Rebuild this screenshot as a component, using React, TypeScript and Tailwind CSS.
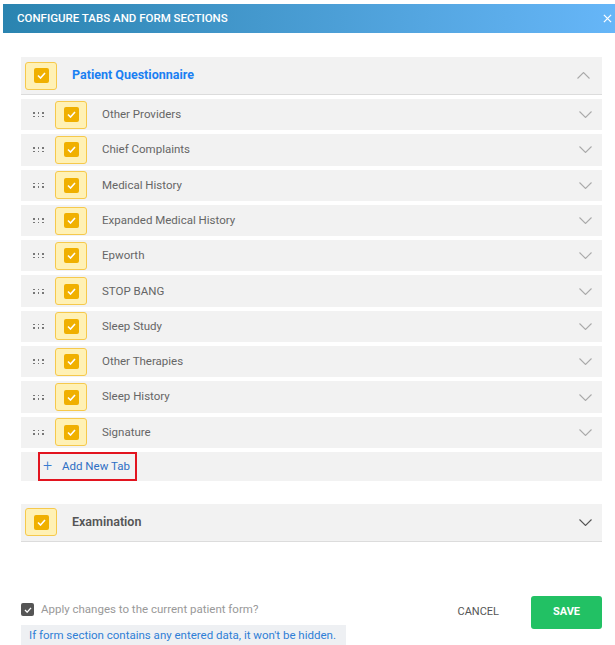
import React from 'react'

const tabs = [
  'Other Providers',
  'Chief Complaints',
  'Medical History',
  'Expanded Medical History',
  'Epworth',
  'STOP BANG',
  'Sleep Study',
  'Other Therapies',
  'Sleep History',
  'Signature',
]

function Chevron({ up = false, dark = false }: { up?: boolean; dark?: boolean }) {
  return (
    <svg width="13" height="7" viewBox="0 0 13 7" className="shrink-0">
      <polyline
        points={up ? '0.5,6.5 6.5,0.5 12.5,6.5' : '0.5,0.5 6.5,6.5 12.5,0.5'}
        fill="none"
        stroke={dark ? '#555' : '#aaa'}
        strokeWidth="1.1"
      />
    </svg>
  )
}

function YellowCheck() {
  return (
    <div className="w-[32px] h-[28px] shrink-0 rounded-[3px] border border-[#f6c94c] bg-[#fff1b5] flex items-center justify-center">
      <div className="w-[15px] h-[15px] rounded-[2px] bg-[#f0b000] flex items-center justify-center">
        <svg width="9" height="7" viewBox="0 0 9 7">
          <polyline points="1,3.5 3.5,6 8,1" fill="none" stroke="#fff" strokeWidth="1.6" />
        </svg>
      </div>
    </div>
  )
}

function DragDots() {
  return (
    <div className="grid grid-cols-3 gap-x-[3px] gap-y-[2px] w-[11px] shrink-0">
      {[...Array(6)].map((_, i) => (
        <div key={i} className="w-[1.5px] h-[1.5px] bg-[#777]"></div>
      ))}
    </div>
  )
}

export default function App() {
  return (
    <div className="w-[615px] h-[645px] bg-white overflow-hidden pl-[3px] pt-[4px] font-['Roboto',sans-serif]">
      <div className="w-[612px] flex flex-col">
        {/* Header */}
        <div className="h-[29px] bg-gradient-to-r from-[#2a84b0] to-[#66b6f8] flex items-center justify-between pl-[14px] pr-[3px]">
          <span className="whitespace-nowrap text-white text-[11.5px] font-medium">CONFIGURE TABS AND FORM SECTIONS</span>
          <svg width="9" height="9" viewBox="0 0 10 10">
            <path d="M1 1 L9 9 M9 1 L1 9" stroke="#fff" strokeWidth="1.4" />
          </svg>
        </div>

        {/* Body */}
        <div className="pl-[18px] pt-[24px]">
          <div className="w-[581px]">
            <div className="h-[38px] bg-[#f2f2f2] border-b border-[#dcdcdc] flex items-center pl-[4px] pr-[12px]">
              <YellowCheck />
              <span className="ml-[15px] whitespace-nowrap text-[12.5px] font-bold text-[#1a80f2]">Patient Questionnaire</span>
              <div className="ml-auto"><Chevron up /></div>
            </div>

            <div className="flex flex-col gap-[4px] mt-[4px]">
              {tabs.map((t) => (
                <div key={t} className="h-[31.3px] bg-[#f2f2f2] flex items-center pl-[12px] pr-[10px]">
                  <DragDots />
                  <div className="ml-[11px]"><YellowCheck /></div>
                  <span className="ml-[15px] whitespace-nowrap text-[11.5px] text-[#666]">{t}</span>
                  <div className="ml-auto"><Chevron /></div>
                </div>
              ))}
              <div className="h-[29px] bg-[#f2f2f2] flex items-center pl-[17px]">
                <div className="h-[29px] border-2 border-[#e2141f] flex items-center pl-[3px] pr-[5px] gap-[10px]">
                  <span className="text-[#3a7bd0] text-[16px] leading-none font-light">+</span>
                  <span className="whitespace-nowrap text-[#2e6fc4] text-[11.5px]">Add New Tab</span>
                </div>
              </div>
            </div>

            <div className="mt-[23px] h-[38px] bg-[#f2f2f2] border-b border-[#dcdcdc] flex items-center pl-[4px] pr-[10px]">
              <YellowCheck />
              <span className="ml-[15px] whitespace-nowrap text-[12.5px] font-semibold text-[#555]">Examination</span>
              <div className="ml-auto"><Chevron dark /></div>
            </div>

            {/* Footer */}
            <div className="mt-[54px] flex items-start">
              <div className="flex flex-col">
                <div className="flex items-center mt-[7px] h-[14px]">
                  <div className="w-[13px] h-[13px] rounded-[2px] bg-[#555] flex items-center justify-center">
                    <svg width="8" height="6" viewBox="0 0 9 7">
                      <polyline points="1,3.5 3.5,6 8,1" fill="none" stroke="#fff" strokeWidth="1.6" />
                    </svg>
                  </div>
                  <span className="ml-[7px] whitespace-nowrap text-[11.5px] text-[#999]">Apply changes to the current patient form?</span>
                </div>
                <div className="mt-[8px] h-[22px] w-[325px] bg-[#eef0f3] flex items-center pl-[8px]">
                  <span className="whitespace-nowrap text-[11.5px] text-[#2f7fd6]">If form section contains any entered data, it won't be hidden.</span>
                </div>
              </div>
              <div className="ml-auto flex items-center gap-[32px]">
                <span className="text-[11px] text-[#555]">CANCEL</span>
                <button className="w-[71px] h-[33px] rounded-[3px] bg-[#22c164] text-white text-[11px] font-bold">SAVE</button>
              </div>
            </div>
          </div>
        </div>
      </div>
    </div>
  )
}
